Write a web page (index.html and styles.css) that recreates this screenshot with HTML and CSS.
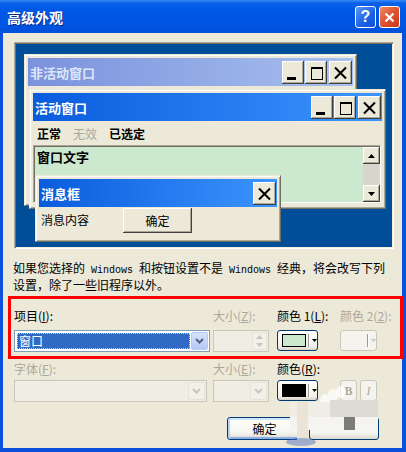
FILE: index.html
```html
<!DOCTYPE html>
<html lang="zh-CN">
<head>
    <meta charset="UTF-8">
    <title>高级外观</title>
    <link rel="stylesheet" href="styles.css">
</head>
<body>
    <div class="dialog">
        <div class="titlebar">
            <span class="title">高级外观</span>
            <div class="title-buttons">
                <span class="tb help">?</span>
                <span class="tb close">
                    <svg width="11" height="11" viewBox="0 0 11 11"><path d="M1.5 1.5l8 8M9.5 1.5l-8 8" stroke="#fff" stroke-width="2.2"/></svg>
                </span>
            </div>
        </div>
        <div class="frame">
            <div class="preview">
                <div class="pwin inactive">
                    <div class="ptitle">
                        <span>非活动窗口</span>
                        <div class="pbtns">
                            <span class="pbtn"><svg width="22" height="23"><rect x="5" y="16" width="9" height="3"/></svg></span>
                            <span class="pbtn"><svg width="22" height="23"><rect x="6.5" y="6.5" width="11" height="12" fill="none" stroke="#000"/><rect x="6" y="6" width="12" height="2"/></svg></span>
                            <span class="pbtn x"><svg width="22" height="23"><path d="M6 6.5l11 11M17 6.5l-11 11" stroke="#000" stroke-width="2"/></svg></span>
                        </div>
                    </div>
                </div>
                <div class="pwin active">
                    <div class="ptitle">
                        <span>活动窗口</span>
                        <div class="pbtns">
                            <span class="pbtn"><svg width="22" height="23"><rect x="5" y="16" width="9" height="3"/></svg></span>
                            <span class="pbtn"><svg width="22" height="23"><rect x="6.5" y="6.5" width="11" height="12" fill="none" stroke="#000"/><rect x="6" y="6" width="12" height="2"/></svg></span>
                            <span class="pbtn x"><svg width="22" height="23"><path d="M6 6.5l11 11M17 6.5l-11 11" stroke="#000" stroke-width="2"/></svg></span>
                        </div>
                    </div>
                    <div class="pmenu">
                        <span>正常</span>
                        <span class="off">无效</span>
                        <span>已选定</span>
                    </div>
                    <div class="ptext">
                        <div class="ptext-body">窗口文字</div>
                        <div class="scrollbar">
                            <span class="sb-btn"><svg width="7" height="4"><path d="M3.5 0L7 4H0z"/></svg></span>
                            <span class="sb-track"></span>
                            <span class="sb-btn"><svg width="7" height="4"><path d="M0 0h7L3.5 4z"/></svg></span>
                        </div>
                    </div>
                </div>
                <div class="pwin msgbox">
                    <div class="ptitle">
                        <span>消息框</span>
                        <div class="pbtns">
                            <span class="pbtn x"><svg width="22" height="23"><path d="M6 6.5l11 11M17 6.5l-11 11" stroke="#000" stroke-width="2"/></svg></span>
                        </div>
                    </div>
                    <div class="msg-body">
                        <span class="msg-text">消息内容</span>
                        <span class="pbutton">确定</span>
                    </div>
                </div>
            </div>

            <p class="note">如果您选择的<span class="mono"> Windows </span>和按钮设置不是<span class="mono"> Windows </span>经典，将会改写下列<br>设置，除了一些旧程序以外。</p>

            <div class="fields first">
                <label>项目(<u>I</u>):</label>
                <label class="off">大小(<u>Z</u>):</label>
                <label>颜色 1(<u>L</u>):</label>
                <label class="off">颜色 2(<u>2</u>):</label>

                <div class="combo wide">
                    <span class="combo-value"><span class="focus">窗口</span></span>
                    <span class="drop"><svg width="15" height="18"><path d="M4 7l3.5 3.5L11 7" stroke="#4d6185" stroke-width="2" fill="none"/></svg></span>
                </div>
                <div class="spinner">
                    <span class="spin-value"></span>
                    <span class="spin-arrows">
                        <svg width="7" height="4"><path d="M3.5 0L7 4H0z" fill="#c9c7ba"/></svg>
                        <svg width="7" height="4"><path d="M0 0h7L3.5 4z" fill="#c9c7ba"/></svg>
                    </span>
                </div>
                <div class="colorbtn">
                    <span class="swatch green"></span>
                    <span class="sep"></span>
                    <svg width="5" height="3"><path d="M0 0h5L2.5 3z"/></svg>
                </div>
                <div class="colorbtn disabled">
                    <span class="swatch empty"></span>
                    <span class="sep"></span>
                    <svg width="5" height="3"><path d="M0 0h5L2.5 3z" fill="#c9c7ba"/></svg>
                </div>
            </div>

            <div class="fields second">
                <label class="off">字体(<u>F</u>):</label>
                <label class="off">大小(<u>E</u>):</label>
                <label>颜色(<u>R</u>):</label>
                <span></span>

                <div class="combo disabled font">
                    <span class="combo-value"></span>
                    <span class="drop"><svg width="15" height="18"><path d="M4 7l3.5 3.5L11 7" stroke="#c9c7ba" stroke-width="2" fill="none"/></svg></span>
                </div>
                <div class="combo disabled small">
                    <span class="combo-value"></span>
                    <span class="drop"><svg width="15" height="18"><path d="M4 7l3.5 3.5L11 7" stroke="#c9c7ba" stroke-width="2" fill="none"/></svg></span>
                </div>
                <div class="colorbtn">
                    <span class="swatch black"></span>
                    <span class="sep"></span>
                    <svg width="5" height="3"><path d="M0 0h5L2.5 3z"/></svg>
                </div>
                <div class="styles">
                    <span class="stylebtn bold">B</span>
                    <span class="stylebtn italic">I</span>
                </div>
            </div>

            <div class="footer">
                <span class="xpbtn default">确定</span>
                <span class="xpbtn cancel"></span>
            </div>
        </div>

        <div class="highlight"></div>

        <div class="watermark">
            <span class="wm dot d1"></span>
            <span class="wm dot d2"></span>
            <span class="wm dot d3"></span>
            <span class="wm b1"></span>
            <span class="wm b2"></span>
            <span class="wm b3"></span>
            <span class="wm b4"></span>
            <span class="wm strip"></span>
            <span class="wm shade"></span>
        </div>
    </div>
</body>
</html>
```

FILE: styles.css
```css
* {
    box-sizing: border-box;
}
body {
    margin: 0;
    background: #fff;
    font-family: "Noto Sans CJK SC", sans-serif;
    font-size: 12px;
    color: #000;
}
.dialog {
    width: 406px;
    height: 452px;
    display: flex;
    flex-direction: column;
    position: relative;
}

/* title bar */
.titlebar {
    height: 33px;
    flex: none;
    display: flex;
    align-items: center;
    justify-content: space-between;
    padding: 0 6px 0 7px;
    background: linear-gradient(#3c8cf7 0, #0b61ea 3px, #0058e6 10px, #0055e3 24px, #0050db 33px);
}
.title {
    color: #fff;
    font-size: 14px;
    font-weight: bold;
    text-shadow: 1px 1px #0a2a8a;
    margin-top: 1px;
}
.title-buttons {
    display: flex;
    gap: 3px;
    margin-top: 1px;
}
.tb {
    width: 21px;
    height: 22px;
    border: 1px solid #fff;
    border-radius: 3px;
    display: flex;
    align-items: center;
    justify-content: center;
    color: #fff;
}
.tb.help {
    background: linear-gradient(135deg, #5a9af8, #1a5fe6 60%, #1450d4);
    font-family: "Liberation Sans", sans-serif;
    font-size: 16px;
    font-weight: bold;
}
.tb.close {
    background: linear-gradient(135deg, #ea8a6a, #e0522e 50%, #c8381a);
}

/* dialog body */
.frame {
    flex: 1;
    background: #ece9d8;
    border: solid #0a50dc;
    border-width: 0 4px 4px 3px;
}

/* preview */
.preview {
    position: relative;
    margin: 9px 0 0 11px;
    width: 380px;
    height: 207px;
    background: #004e98;
    border: 1px solid;
    border-color: #aca899 #fff #fff #aca899;
    box-shadow: inset 1px 1px #716f64, inset -1px -1px #f1efe2;
}
.pwin {
    position: absolute;
    display: flex;
    flex-direction: column;
    background: #ece9d8;
    border: 1px solid;
    border-color: #ece9d8 #716f64 #716f64 #ece9d8;
    box-shadow: inset 1px 1px #fff, inset -1px -1px #aca899;
    padding: 3px;
}
.pwin.inactive {
    left: 9px;
    top: 11px;
    width: 333px;
    height: 152px;
}
.pwin.active {
    left: 14px;
    top: 46px;
    width: 357px;
    height: 120px;
}
.pwin.msgbox {
    left: 20px;
    top: 132px;
    width: 246px;
    height: 67px;
}
.ptitle {
    height: 28px;
    flex: none;
    display: flex;
    align-items: center;
    justify-content: space-between;
    padding: 0 1px 0 2px;
    font-size: 13px;
    font-weight: bold;
    color: #fff;
    background: linear-gradient(to right, #0a5cdc, #3c95ff);
}
.inactive .ptitle {
    color: #dce6f8;
    background: linear-gradient(to right, #7b92dd, #a8c0ef);
}
.msgbox .ptitle {
    height: 28px;
}
.pbtns {
    display: flex;
    gap: 1px;
}
.pbtn {
    width: 22px;
    height: 23px;
    background: #ece9d8;
    box-shadow: inset -1px -1px #404040, inset 1px 1px #fff, inset -2px -2px #aca899;
}
.pbtn svg {
    display: block;
}
.pbtn.x {
    width: 23px;
    margin-left: 1px;
}
.pmenu {
    height: 24px;
    flex: none;
    display: flex;
    align-items: center;
    gap: 12px;
    padding-left: 4px;
    font-weight: bold;
}
.pmenu .off {
    color: #aca899;
    font-weight: normal;
}
.ptext {
    flex: 1;
    display: flex;
    margin: 0 1px 2px 0;
    background: #cce8cf;
    border: 1px solid;
    border-color: #aca899 #fff #fff #aca899;
    box-shadow: inset 1px 1px #716f64;
    padding: 1px 0 0 1px;
}
.ptext-body {
    flex: 1;
    padding: 1px 2px;
    font-size: 13px;
    font-weight: bold;
    line-height: 18px;
}
.scrollbar {
    width: 17px;
    display: flex;
    flex-direction: column;
}
.sb-btn {
    height: 17px;
    flex: none;
    display: flex;
    align-items: center;
    justify-content: center;
    background: #ece9d8;
    box-shadow: inset -1px -1px #404040, inset 1px 1px #fff, inset -2px -2px #aca899;
}
.sb-track {
    flex: 1;
    background: #d8d5cc;
}
.msg-body {
    flex: 1;
    display: flex;
    align-items: flex-start;
    padding: 1px 0 0 2px;
}
.msg-text {
    padding-top: 4px;
    line-height: 16px;
}
.pbutton {
    margin-left: 34px;
    width: 69px;
    height: 25px;
    display: flex;
    align-items: center;
    justify-content: center;
    background: #ece9d8;
    box-shadow: inset -1px -1px #404040, inset 1px 1px #fff, inset -2px -2px #aca899;
}

/* note */
.note {
    margin: 12px 0 0 10px;
    line-height: 14px;
    white-space: nowrap;
}
.mono {
    font-family: "Liberation Mono", monospace;
    font-size: 10px;
}

/* fields */
.fields {
    display: grid;
    grid-template-columns: 199px 64px 63px 1fr;
    grid-template-rows: 14px 22px;
    padding-left: 11px;
    line-height: 14px;
}
.fields.first {
    margin-top: 17px;
    row-gap: 7px;
}
.fields.second {
    margin-top: 10px;
    row-gap: 4px;
}
.fields label.off {
    color: #aca899;
}
.fields u {
    text-underline-offset: 1px;
}
.combo {
    height: 22px;
    display: flex;
    border: 1px solid #7f9db9;
    background: #fff;
    padding: 1px;
}
.combo.wide {
    width: 196px;
}
.combo.font {
    width: 193px;
}
.combo.small {
    width: 56px;
}
.combo.disabled {
    border-color: #c9c7ba;
    background: #f0eee4;
}
.combo-value {
    flex: 1;
    display: flex;
    padding: 1px;
}
.focus {
    flex: 1;
    background: #316ac5;
    color: #fff;
    outline: 1px dotted #e8d870;
    outline-offset: -1px;
    padding-left: 2px;
    line-height: 16px;
}
.drop {
    width: 17px;
    display: flex;
    align-items: center;
    justify-content: center;
    border: 1px solid #b7c9f5;
    border-radius: 2px;
    background: linear-gradient(#d6e2fc, #b5c8f6);
}
.disabled .drop {
    border-color: #e6e4da;
    background: #f2f0e8;
}
.spinner {
    width: 56px;
    height: 22px;
    display: flex;
    border: 1px solid #c9c7ba;
    background: #f0eee4;
    padding: 1px;
}
.spin-value {
    flex: 1;
}
.spin-arrows {
    width: 15px;
    display: flex;
    flex-direction: column;
    align-items: center;
    justify-content: space-around;
    border: 1px solid #e6e4da;
    border-radius: 2px;
    background: #f2f0e8;
}
.colorbtn {
    width: 41px;
    height: 21px;
    display: flex;
    align-items: center;
    gap: 2px;
    padding-left: 4px;
    border: 1px solid #003c74;
    border-radius: 3px;
    background: linear-gradient(#fff, #f0f0ea 80%, #d8d2c6);
}
.colorbtn.disabled {
    width: 37px;
    border-color: #c9c7ba;
    background: #f4f3ee;
}
.swatch {
    width: 25px;
    height: 13px;
    border: 1px solid #000;
}
.swatch.green {
    background: #cce8cf;
}
.swatch.black {
    background: #000;
}
.swatch.empty {
    width: 21px;
    border: 0;
}
.sep {
    width: 2px;
    height: 13px;
    border-left: 1px solid #9d9b8f;
    border-right: 1px solid #fff;
}
.styles {
    display: flex;
    gap: 3px;
}
.stylebtn {
    width: 17px;
    height: 21px;
    display: flex;
    align-items: center;
    justify-content: center;
    border: 1px solid #c9c7ba;
    border-radius: 3px;
    background: #f4f3ee;
    color: #aca899;
    font-family: "Liberation Serif", serif;
    font-size: 12px;
}
.stylebtn.bold {
    font-weight: bold;
}
.stylebtn.italic {
    font-style: italic;
}

/* footer buttons */
.footer {
    display: flex;
    gap: 7px;
    margin-top: 15px;
    padding-left: 224px;
}
.xpbtn {
    width: 75px;
    height: 23px;
    display: flex;
    align-items: center;
    justify-content: center;
    border: 1px solid #003c74;
    border-radius: 3px;
    background: linear-gradient(#fff, #f4f4f0 70%, #dcd8cc);
}
.xpbtn.default {
    box-shadow: inset 0 2px #cee7ff, inset 2px 0 #b9d1f7, inset -2px 0 #b9d1f7, inset 0 -2px #89ade4;
}
.xpbtn.cancel {
    width: 70px;
}

/* red annotation box */
.highlight {
    position: absolute;
    left: 8px;
    top: 296px;
    width: 395px;
    height: 63px;
    border: 3px solid #f00;
}

/* pixelated watermark */
.watermark {
    position: absolute;
    left: 284px;
    top: 386px;
    width: 96px;
    height: 62px;
}
.wm {
    position: absolute;
}
.dot {
    width: 10px;
    height: 12px;
    border-radius: 50%;
    background: rgba(255, 255, 255, 0.75);
}
.d1 { left: 36px; top: 8px; }
.d2 { left: 44px; top: 3px; }
.d3 { left: 52px; top: 0; }
.b1 {
    left: 6px;
    top: 16px;
    width: 40px;
    height: 15px;
    background: #efede6;
}
.b2 {
    left: 46px;
    top: 14px;
    width: 48px;
    height: 17px;
    background: #dddbd3;
}
.b3 {
    left: 6px;
    top: 31px;
    width: 88px;
    height: 13px;
    background: #f5f4f0;
}
.b4 {
    left: 60px;
    top: 31px;
    width: 11px;
    height: 13px;
    background: #7b7b7b;
}
.strip {
    left: 13px;
    top: 16px;
    width: 11px;
    height: 41px;
    background: #e9e4d6;
}
.shade {
    left: 2px;
    top: 52px;
    width: 30px;
    height: 8px;
    border-radius: 50%;
    background: rgba(70, 100, 190, 0.45);
}
```
